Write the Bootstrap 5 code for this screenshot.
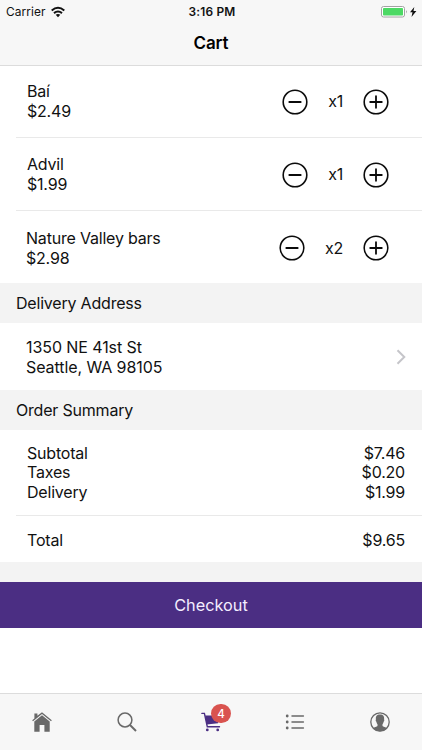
<!DOCTYPE html>
<html lang="en">
<head>
<meta charset="utf-8">
<meta name="viewport" content="width=device-width, initial-scale=1">
<title>Cart</title>
<link href="https://cdn.jsdelivr.net/npm/bootstrap@5.3.0/dist/css/bootstrap.min.css" rel="stylesheet">
<style>
body{font-family:Inter,"Liberation Sans",sans-serif;font-size:16px;line-height:19.6px;letter-spacing:-.2px;color:#111;background:#fff;height:750px;overflow:hidden}
svg{display:block;flex:none}
.top-area{height:66px;background:#f7f7f7;border-bottom:1px solid #dcdcdc}
.status-bar{height:22px;padding:1px 4px 0 6px;font-size:11.9px;letter-spacing:.1px}
.status-bar>*{flex:1}
.clock{font-weight:600;letter-spacing:.2px}
.page-title{height:42px;font-size:17px;font-weight:600;letter-spacing:-.1px}
.cart-item{height:72px;margin-left:16px;padding:1px 33px 0 11px;border-bottom:1px solid #e9e9e9;flex:none}
.cart-item.item-mid{height:73px;padding-top:2px}
.cart-item.item-last{height:72px;border:0;padding-left:10px;padding-top:3px}
.stepper{gap:20px}
.stepper button{line-height:0;margin-top:-1px}
.group-title{height:40px;padding:1px 0 0 16px;background:#f3f3f3}
.address{height:67px;padding:3px 16px 0 26px;letter-spacing:-.08px}
.address svg{margin-top:-3px}
.charges{height:86px;margin-left:16px;padding:1px 17px 0 11px;border-bottom:1px solid #e9e9e9}
.total{height:46px;padding:3px 17px 0 27px}
.spacer{height:20px;background:#f3f3f3}
.checkout{--bs-btn-bg:#4b2e83;--bs-btn-color:#f4edff;--bs-btn-hover-bg:#412775;--bs-btn-hover-color:#fff;--bs-btn-border-width:0;height:46px;font-size:16.3px}
.tabs{height:57px;background:#f7f7f7;border-top:1px solid #dcdcdc;color:#696969}
.tabs a{color:inherit}
.tabs .active{color:#4b2e83}
.count{position:absolute;left:10px;top:-8px;width:20px;height:19px;border-radius:10px;background:#d9534f;color:#fff;font-size:11.5px;line-height:20px;font-weight:500}
</style>
<script src="https://cdn.jsdelivr.net/npm/bootstrap@5.3.0/dist/js/bootstrap.bundle.min.js"></script>
</head>
<body class="d-flex flex-column">
<svg class="d-none">
<symbol id="minus" viewBox="0 0 26 26"><g fill="none" stroke="#0b0b0b"><circle cx="13" cy="13" r="11.8" stroke-width="1.6"/><path d="M7.3 13h11.4" stroke-width="1.8" stroke-linecap="round"/></g></symbol>
<symbol id="plus" viewBox="0 0 26 26"><g fill="none" stroke="#0b0b0b"><circle cx="13" cy="13" r="11.8" stroke-width="1.6"/><path d="M7.2 13h11.6M13 7.2v11.6" stroke-width="1.8" stroke-linecap="round"/></g></symbol>
</svg>
<header class="top-area">
<div class="status-bar d-flex align-items-center">
<div class="d-flex align-items-center"><span>Carrier</span>
<svg class="ms-1" width="16" height="12" viewBox="-1 0 16 12"><g fill="none" stroke="#111" stroke-width="2"><path d="M.7 4.5Q7-.9 13.3 4.5M3 7.1q4-3.2 8 0"/></g><path d="M4.7 8.8Q7 7.2 9.3 8.8L7 11.2z" fill="#111"/></svg></div>
<div class="clock text-center">3:16 PM</div>
<div class="d-flex justify-content-end">
<svg width="38" height="12" viewBox="0 0 38 12"><rect x="1.5" y=".5" width="23" height="10.5" rx="2" fill="#fff" stroke="#a2a2a2"/><rect x="3" y="2" width="20" height="7.5" rx=".8" fill="#4cd964"/><path d="M26 3.9q1.800 1.800 0 3.600z" fill="#999"/><path d="M34.300 .9l-4.300 5.400h2.500l-1 4.600 4.900-5.900h-2.900z" fill="#111"/></svg></div>
</div>
<h1 class="page-title m-0 d-flex align-items-center justify-content-center text-black">Cart</h1>
</header>
<main class="flex-grow-1">
<section>
<div class="cart-item d-flex justify-content-between align-items-center"><div>Baí<br>$2.49</div><div class="stepper d-flex align-items-center"><button class="btn p-0 border-0" aria-label="Remove one Baí"><svg width="26" height="26"><use href="#minus"/></svg></button><span>x1</span><button class="btn p-0 border-0" aria-label="Add one Baí"><svg width="26" height="26"><use href="#plus"/></svg></button></div></div>
<div class="cart-item item-mid d-flex justify-content-between align-items-center"><div>Advil<br>$1.99</div><div class="stepper d-flex align-items-center"><button class="btn p-0 border-0" aria-label="Remove one Advil"><svg width="26" height="26"><use href="#minus"/></svg></button><span>x1</span><button class="btn p-0 border-0" aria-label="Add one Advil"><svg width="26" height="26"><use href="#plus"/></svg></button></div></div>
<div class="cart-item item-last d-flex justify-content-between align-items-center"><div>Nature Valley bars<br>$2.98</div><div class="stepper d-flex align-items-center"><button class="btn p-0 border-0" aria-label="Remove one Nature Valley bars"><svg width="26" height="26"><use href="#minus"/></svg></button><span>x2</span><button class="btn p-0 border-0" aria-label="Add one Nature Valley bars"><svg width="26" height="26"><use href="#plus"/></svg></button></div></div>
</section>
<section>
<div class="group-title d-flex align-items-center">Delivery Address</div>
<div class="address d-flex align-items-center justify-content-between"><div>1350 NE 41st St<br>Seattle, WA 98105</div>
<svg width="10" height="16" viewBox="0 0 10 16"><path d="M1.500 1.200L8.300 8l-6.800 6.800" fill="none" stroke="#c5c5ca" stroke-width="2"/></svg></div>
</section>
<section>
<div class="group-title d-flex align-items-center">Order Summary</div>
<div class="charges d-flex align-items-center justify-content-between"><div>Subtotal<br>Taxes<br>Delivery</div><div class="text-end">$7.46<br>$0.20<br>$1.99</div></div>
<div class="total d-flex align-items-center justify-content-between"><span>Total</span><span>$9.65</span></div>
</section>
<div class="spacer"></div>
<button class="btn checkout w-100 rounded-0 p-0">Checkout</button>
</main>
<nav class="tabs d-flex align-items-center">
<a href="#" class="col d-flex justify-content-center" aria-label="Home"><svg width="20" height="20" viewBox="0 0 20 20"><path fill="currentColor" d="M2.400 1.500h3v2.200L10 .2l9.800 8-.8 1L10 1.900 1 9.200l-.8-1 2.200-1.800z"/><path fill="currentColor" d="M2.300 9.400L10 3.200l7.700 6.200v10.300h-5.300v-6.800H7.600v6.800H2.300z"/></svg></a>
<a href="#" class="col d-flex justify-content-center" aria-label="Search"><svg width="20" height="20" viewBox="0 0 20 20"><g fill="none" stroke="currentColor"><circle cx="8" cy="8" r="6.900" stroke-width="1.500"/><path d="M13 13l6 6" stroke-width="2"/></g></svg></a>
<a href="#" class="col d-flex justify-content-center active text-decoration-none" aria-label="Cart"><span class="position-relative"><svg width="20" height="20" viewBox="0 0 20 20"><path fill="currentColor" d="M4.100 3.600h14.700l-1.800 7.600-11.400 1.400z"/><path d="M.9 1.400H3.400L6.300 14.700H18.500" fill="none" stroke="currentColor" stroke-width="1.400" stroke-linecap="round"/><circle cx="6.300" cy="17.900" r="1.400" fill="currentColor"/><circle cx="16.700" cy="17.900" r="1.400" fill="currentColor"/></svg><span class="count text-center">4</span></span></a>
<a href="#" class="col d-flex justify-content-center" aria-label="Orders"><svg width="20" height="16" viewBox="0 0 20 16"><g stroke="currentColor" stroke-linecap="round"><path d="M7 2h11.400M7 8h11.400M7 14h11.400" stroke-width="1.500"/><path d="M2.200 2h.01M2.200 8h.01M2.200 14h.01" stroke-width="2.800"/></g></svg></a>
<a href="#" class="col d-flex justify-content-center" aria-label="Profile"><svg width="20" height="20" viewBox="0 0 20 20"><circle cx="10" cy="10" r="9.200" fill="none" stroke="currentColor" stroke-width="1.300"/><path fill="currentColor" d="M10 2.500c3.300 0 4.400 1.900 4.100 4.900.5.3.2 1.900-.5 2.400-.2 1.300-.6 2-1.100 2.500v1.600c.5.900 3.300 1 4.600 2A9 9 0 0 1 10 19.200a9 9 0 0 1-7.100-3.300c1.300-1 4.100-1.100 4.600-2v-1.600c-.5-.5-.9-1.200-1.100-2.500-.7-.5-1-2.100-.5-2.400C5.600 4.400 6.700 2.500 10 2.500z"/></svg></a>
</nav>
</body>
</html>
